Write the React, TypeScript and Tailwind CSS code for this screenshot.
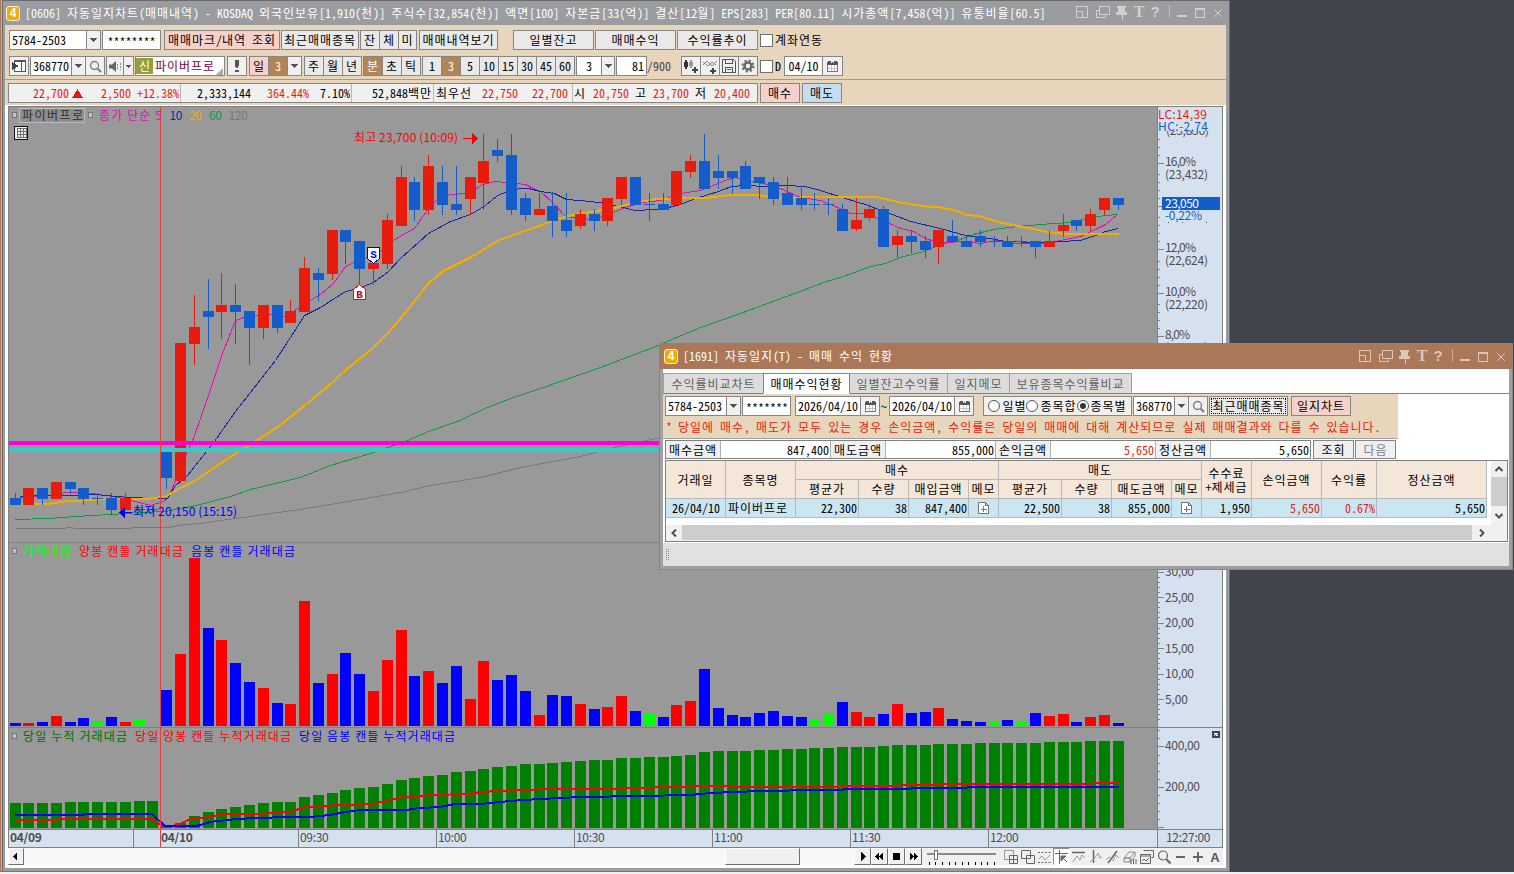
import React from "react";

const FONT = "font-['Noto_Sans_CJK_KR',sans-serif] text-[12px]";

/* Fixed-pitch label: Latin glyphs 6px wide, Hangul glyphs 12px wide. */
function T({ s, className = "" }: { s: string; className?: string }) {
  return (
    <span className={`whitespace-pre [font-feature-settings:'hwid'] ${className}`}>
      {s.split(/([\u3131-\uD7A3]+)/).map((part, i) =>
        i % 2 ? (
          <span key={i} className="tracking-[0.96px]">
            {part}
          </span>
        ) : (
          part
        ),
      )}
    </span>
  );
}

function Cell({ s, className = "", children }: { s?: string; className?: string; children?: React.ReactNode }) {
  return (
    <div className={`flex h-[20px] shrink-0 items-center justify-center border border-[#868686] leading-[14px] ${className}`}>
      {s !== undefined && <T s={s} />}
      {children}
    </div>
  );
}

const GREY = "bg-[#e9e9e9]";
const PINK = "bg-[#f6d1cc]";
const BROWN = "bg-[#b28556] text-white";
const WHITE = "bg-white";

function Drop({ className = "" }: { className?: string }) {
  return (
    <Cell className={`-ml-px bg-[#f0f0f0] ${className}`}>
      <svg width="7" height="4" shapeRendering="crispEdges">
        <path d="M0 0h7L3.5 4z" fill="#555" />
      </svg>
    </Cell>
  );
}

function Lens({ className = "" }: { className?: string }) {
  return (
    <Cell className={`-ml-px bg-[#f0f0f0] ${className}`}>
      <svg width="13" height="13" fill="none">
        <circle cx="5.5" cy="5.5" r="4" stroke="#808080" strokeWidth="1.4" />
        <path d="M8.5 8.5l3.500 3.500" stroke="#808080" strokeWidth="2.2" />
      </svg>
    </Cell>
  );
}

function Calendar({ className = "" }: { className?: string }) {
  return (
    <Cell className={`-ml-px bg-[#f0f0f0] ${className}`}>
      <svg width="11" height="11" shapeRendering="crispEdges">
        <path d="M0 1h11v10H0z" fill="#777" />
        <path d="M1 4h9v6H1z" fill="#fff" />
        <path d="M4 4h1v6H4zM7 4h1v6H7zM1 7h9v1H1z" fill="#c4c4c4" />
        <path d="M0 1h11v3H0zM1 0h3v2H1zM7 0h3v2H7z" fill="#555" />
        <path d="M4 0h1v2H4zM6 0h1v2H6z" fill="#f0f0f0" />
      </svg>
    </Cell>
  );
}

function Logo() {
  return (
    <div className="flex h-[15px] w-[14px] items-center justify-center rounded-[3px] border border-[#fff3c8] bg-[#eeab0c] font-['Liberation_Sans',sans-serif] text-[12px] leading-[13px] font-bold text-white">
      4
    </div>
  );
}

function WindowIcons({ color }: { color: string }) {
  return (
    <svg width="148" height="16" viewBox="0 -1 148 16" fill="none" stroke={color} shapeRendering="crispEdges" className="overflow-visible">
      <path d="M.5 1v10.5h11V.5H0" />
      <path d="M1 5.500h5.500v6" strokeWidth="1.4" />
      <path d="M23.500 .5h10v8h-10zM23 4.500h-3v7h9v-3" />
      <path d="M41 0h9v2h-1v4h2v3h-4.500v5h-1v-5H40V6h2V2h-1z" fill={color} stroke="none" />
      <text x="63" y="11" textAnchor="middle" fill={color} stroke="none" className="font-['Liberation_Serif',serif] text-[16px] font-bold">
        T
      </text>
      <text x="79" y="11" textAnchor="middle" fill={color} stroke="none" className="font-['Liberation_Sans',sans-serif] text-[15px] font-bold">
        ?
      </text>
      <path d="M93.500 -1v13" strokeOpacity=".7" />
      <path d="M101 10h10" strokeWidth="2" />
      <path d="M119.500 2.500h9v9h-9zM119 3.500h10" />
      <path d="M138 3l8 8M146 3l-8 8" shapeRendering="auto" />
    </svg>
  );
}

function Check() {
  return <div className="h-[13px] w-[13px] shrink-0 border border-[#707070] bg-white" />;
}

/* ---- Chart data: [up, bodyTop, bodyBottom, high, low] ---- */
const CANDLES: [number, number, number, number, number][] = [
  [0, 498, 505, 493, 505], [1, 488, 505, 488, 505], [0, 488, 499, 488, 505], [1, 482, 499, 482, 499],
  [0, 482, 489, 482, 494], [0, 488, 499, 488, 505], [0, 498, 499, 493, 505], [0, 498, 510, 493, 515],
  [1, 498, 510, 493, 510], [0, 509, 510, 509, 510], [0, 509, 510, 506, 513], [0, 450, 478, 450, 489],
  [1, 343, 481, 343, 483], [1, 327, 344, 295, 365], [0, 311, 317, 279, 349], [1, 305, 312, 273, 339],
  [0, 305, 312, 284, 344], [0, 311, 328, 311, 365], [1, 305, 328, 305, 339], [0, 305, 328, 305, 333],
  [1, 311, 323, 300, 323], [1, 268, 312, 257, 312], [0, 273, 280, 268, 301], [1, 230, 274, 230, 280],
  [0, 230, 242, 230, 264], [0, 241, 269, 241, 285], [1, 263, 269, 263, 285], [1, 220, 264, 214, 269],
  [1, 177, 226, 166, 226], [0, 182, 210, 177, 221], [1, 166, 210, 155, 215], [0, 182, 205, 166, 215],
  [0, 204, 210, 166, 215], [1, 177, 199, 177, 215], [1, 161, 183, 134, 210], [0, 150, 156, 139, 162],
  [0, 155, 210, 134, 215], [0, 198, 215, 193, 221], [1, 209, 215, 193, 215], [0, 206, 221, 192, 237],
  [0, 220, 231, 193, 237], [1, 214, 226, 209, 229], [0, 214, 221, 209, 231], [1, 198, 221, 198, 226],
  [1, 177, 199, 177, 205], [0, 177, 205, 177, 205], [0, 204, 205, 193, 221], [0, 204, 210, 193, 210],
  [1, 171, 205, 171, 205], [1, 161, 172, 155, 178], [0, 161, 189, 134, 189], [0, 171, 178, 155, 189],
  [0, 171, 178, 171, 194], [0, 166, 189, 161, 189], [0, 177, 183, 177, 199], [0, 182, 199, 177, 205],
  [0, 193, 205, 177, 205], [0, 198, 205, 188, 210], [0, 204, 205, 193, 210], [0, 204, 205, 198, 215],
  [0, 209, 231, 204, 231], [1, 220, 229, 198, 231], [1, 209, 218, 204, 221], [0, 209, 247, 206, 247],
  [1, 236, 245, 230, 258], [0, 236, 242, 230, 253], [0, 241, 250, 236, 258], [1, 230, 247, 230, 264],
  [0, 236, 242, 220, 242], [0, 241, 247, 235, 247], [0, 236, 242, 230, 247], [0, 241, 242, 236, 247],
  [0, 241, 247, 236, 247], [1, 241, 242, 236, 247], [0, 241, 247, 241, 258], [1, 241, 247, 230, 247],
  [1, 225, 231, 214, 237], [0, 220, 226, 220, 231], [1, 214, 226, 209, 231], [1, 198, 210, 198, 215],
  [0, 198, 205, 198, 210],
];

const VOL_TOP = [
  723, 723, 722, 716, 722, 718, 721, 717, 722, 720, 725, 690, 654, 558, 628, 640, 663, 682, 688, 703, 704, 601, 683, 674,
  653, 674, 691, 660, 630, 676, 671, 683, 666, 699, 661, 680, 675, 691, 715, 695, 696, 704, 709, 707, 696, 711, 714, 717,
  705, 701, 669, 708, 715, 717, 713, 711, 716, 717, 719, 713, 702, 712, 717, 714, 704, 713, 712, 708, 719, 721, 722, 722,
  720, 722, 713, 716, 714, 722, 717, 715, 723,
];

/* Ten bars per group: b = down, r = up, g = unchanged */
const VOL_KIND = [
  "brbrbbgbrg",
  "gbrrbrbbrb",
  "rrbrbbrrrb",
  "rbbrrbbbrb",
  "brbrrbgbrr",
  "bbbbbbbbgg",
  "brrbrbbrbb",
  "bgbgbrrbrr",
  "b",
].join("");
const KIND: Record<string, string> = { b: "#0000ff", r: "#ff0000", g: "#00ff00" };

const CUM_TOP = [
  803, 803, 803, 803, 802, 802, 802, 802, 802, 801, 801, 826, 823, 816, 812, 809, 807, 805, 803, 802, 802, 797, 795, 793,
  790, 788, 787, 784, 780, 778, 776, 775, 772, 771, 769, 767, 766, 764, 764, 763, 762, 761, 760, 760, 758, 758, 757, 757,
  756, 755, 752, 751, 751, 751, 750, 750, 749, 749, 748, 748, 747, 747, 747, 746, 745, 745, 745, 744, 744, 744, 743, 743,
  743, 743, 743, 742, 742, 742, 741, 741, 741,
];

const barX = (i: number) => 10 + Math.floor(i * 13.79);

const MA5 =
  "20,497 50,495 65,492 80,492 92,493 105,495 118,497 135,501 150,505 163,501 168,497 175,480 181,472 186,453 193,438 208,395 222,353 235,320 249,315 272,314 285,316 299,307 313,298 320,294 333,283 345,266 356,261 367,257 382,250 393,240 401,235 414,228 428,208 437,199 450,194 465,193 472,191 482,184 495,181 505,182 525,184 533,188 540,191 552,202 565,216 580,218 592,219 605,215 625,207 642,202 660,200 680,193 700,190 710,186 725,180 735,177 750,181 768,184 780,188 800,197 820,200 835,206 850,213 865,213 880,219 900,228 913,231 925,238 935,241 945,242 965,241 980,243 995,240 1015,243 1045,243 1060,240 1080,236 1095,229 1105,224 1117,214";
const MA10 =
  "20,496 35,495 60,495 95,494 115,496 132,497 153,498 167,498 175,485 187,475 214,441 235,411 275,360 290,337 304,315 320,307 345,291 358,288 373,282 388,271 400,258 428,233 450,221 470,214 485,205 497,195 510,190 520,188 528,188 540,191 554,193 566,199 590,201 605,203 622,207 635,210 655,209 668,207 680,204 695,198 718,191 731,186 745,185 765,186 785,185 805,186 820,190 845,198 868,205 880,210 892,214 910,221 940,228 965,235 990,238 1005,241 1035,242 1060,241 1080,240 1095,235 1105,231 1118,228";
const MA20 =
  "20,503 50,503 65,501 100,499 125,498 150,498 165,496 175,490 195,480 220,463 240,450 256,440 278,426 303,406 325,388 347,368 372,348 388,332 400,318 413,302 428,283 442,271 470,257 498,240 520,232 540,225 555,219 570,215 587,212 605,209 620,206 630,203 653,199 687,197 710,197 733,194 745,194 760,195 773,197 800,197 820,196 873,196 887,199 900,202 925,206 940,207 955,210 965,214 980,216 1000,222 1020,226 1045,231 1060,233 1090,234 1105,233 1118,233";
const MA60 =
  "15,519 48,518 75,516 110,514 140,512 165,511 180,508 200,504 230,496 250,489 275,483 300,477 330,465 370,453 407,440 428,431 457,421 487,407 510,398 540,388 600,367 650,348 700,327 740,313 775,300 797,292 823,282 843,276 870,266 885,263 900,257 923,251 940,244 957,240 973,234 993,229 1017,226 1053,223 1070,222 1087,218 1105,215 1118,214";
const MA120 =
  "15,528 63,528 68,527 77,528 130,528 132,527 167,527 185,524 200,523 220,520 250,516 270,513 300,509 330,504 400,492 430,485 480,477 520,467 580,456 610,448 665,436";
const CUM_RED =
  "15,820 57,820 58,819 152,819 162,826 172,826 180,824 190,819 210,817 222,814 262,814 270,813 290,812 305,807 325,806 340,805 373,804 390,800 402,797 420,796 430,795 470,794 480,792 500,791 520,790 550,789 600,789 640,788 700,786 760,787 820,787 857,786 897,786 898,785 938,785 939,784 1091,784 1092,783 1119,783";
const CUM_BLUE =
  "15,815 83,815 84,814 152,814 165,826 197,826 210,822 228,820 237,819 255,818 290,817 310,817 330,815 345,812 360,810 405,810 420,808 440,807 455,804 480,804 510,801 540,799 580,797 640,796 690,795 710,793 760,791 820,790 843,790 844,789 911,789 912,788 967,788 968,787 1119,787";

const CT = "font-['Noto_Sans_CJK_KR',sans-serif] text-[12px]";

function L({ x, y, w, fill, children, className = "" }: { x: number; y: number; w: number; fill: string; children: string; className?: string }) {
  return (
    <text x={x} y={y} textLength={w} fill={fill} className={`${CT} ${className}`}>
      {children}
    </text>
  );
}

function Plot() {
  return (
    <svg width="1148" height="722" viewBox="9 107 1148 722" shapeRendering="crispEdges" className="block shrink-0 bg-[#999999]">
      <g fill="none" transform="translate(.5 .5)">
        <polyline points={MA120} stroke="#7a7a7a" />
        <polyline points={MA60} stroke="#0f9b3f" />
        <polyline points={MA5} stroke="#dd12b0" />
        <polyline points={MA10} stroke="#1428a8" />
        <polyline points={MA20} stroke="#f2ae00" strokeWidth="2" />
      </g>
      {CANDLES.map(([up, t, b, h, l], i) => (
        <g key={i} fill={up ? "#e81c0c" : "#125ccb"}>
          <rect x={barX(i)} y={t} width="11" height={b - t} />
          <rect x={barX(i) + 5} y={h} width="1" height={l - h} />
        </g>
      ))}
      <rect x="9" y="441" width="1148" height="4" fill="#ff00d8" />
      <rect x="9" y="448" width="1148" height="4" fill="#33cccc" />
      <rect x="9" y="542" width="1148" height="1" fill="#808080" />
      <rect x="9" y="727" width="1148" height="1" fill="#808080" />
      {VOL_TOP.map((t, i) => (
        <rect key={i} x={barX(i)} y={t} width="11" height={726 - t} fill={KIND[VOL_KIND[i]]} />
      ))}
      {CUM_TOP.map((t, i) => (
        <rect key={i} x={barX(i)} y={t} width="11" height={828 - t} fill="#008000" />
      ))}
      <g fill="none" strokeWidth="2">
        <polyline points={CUM_RED} stroke="#ff0000" />
        <polyline points={CUM_BLUE} stroke="#0000ff" />
      </g>
      <rect x="160" y="107" width="1" height="722" fill="#e04040" />

      {[[12, 113], [88, 113], [12, 549], [12, 734]].map(([x, y]) => (
        <rect key={`${x}-${y}`} x={x + 0.5} y={y - 0.5} width="4" height="5" fill="#c4c4c4" stroke="#777" />
      ))}
      <rect x="19.500" y="108.500" width="65" height="14" fill="#8e8e8e" stroke="#bcbcbc" />
      <L x={22} y={120} w={61} fill="#303030">파이버프로</L>
      <L x={99} y={120} w={63} fill="#dd12b0">종가 단순 5</L>
      <rect x="161" y="108" width="4" height="14" fill="#999999" />
      <L x={169.5} y={120} w={13} fill="#1428a8">10</L>
      <L x={189} y={120} w={13} fill="#f2ae00">20</L>
      <L x={209} y={120} w={13} fill="#0f9b3f">60</L>
      <L x={228.5} y={120} w={19.5} fill="#777777">120</L>
      <rect x="14.500" y="126.500" width="13" height="13" fill="#eee" stroke="#111" />
      <path d="M17 128.500h9M17 131.500h9M17 134.500h9M17 137.500h9M17.500 128v10M20.500 128v10M23.500 128v10M26 128v10" stroke="#707070" fill="none" />

      <L x={354} y={142} w={104} fill="#ff0000">최고 23,700 (10:09)</L>
      <path d="M463 138h9v-5l6 5.500-6 5.500v-5h-9z" fill="#ff0000" />
      <L x={133} y={516} w={104} fill="#0000ff">최저 20,150 (15:15)</L>
      <path d="M132 512h-7v-5l-6 5.500 6 5.500v-5h7z" fill="#0000ff" />

      <path d="M367.500 247.500h12v11l-6 5-6-5z" fill="#fff" stroke="#0000cc" />
      <text x="373.500" y="258" textAnchor="middle" fill="#0000ff" className="font-['Liberation_Mono',monospace] text-[11px] font-bold">S</text>
      <path d="M353.500 299.500h12v-10l-6-5-6 5z" fill="#fff" stroke="#dd1111" />
      <text x="359.500" y="298" textAnchor="middle" fill="#cc0011" className="font-['Liberation_Mono',monospace] text-[11px] font-bold">B</text>

      <L x={23} y={556} w={48} fill="#00ff00">거래대금</L>
      <L x={79} y={556} w={104} fill="#ff0000">양봉 캔들 거래대금</L>
      <L x={191} y={556} w={104} fill="#0000ff">음봉 캔들 거래대금</L>
      <L x={23} y={741} w={104} fill="#007000">당일 누적 거래대금</L>
      <L x={135} y={741} w={156} fill="#ff0000">당일 양봉 캔들 누적거래대금</L>
      <L x={299} y={741} w={156} fill="#0000ff">당일 음봉 캔들 누적거래대금</L>
    </svg>
  );
}

const PRICE_MINOR = [139, 147, 155, 174, 182, 190, 198, 217, 225, 233, 241, 261, 269, 277, 285, 304, 312, 320, 328];
const PRICE_MAJOR = [163, 206, 249, 293, 336];
const VOL_MAJOR = [572, 597, 623, 648, 674, 699];
const CUM_MAJOR = [746, 787, 827];

function PriceAxis() {
  const gray = "#4c4c4c";
  return (
    <svg width="65" height="722" viewBox="1157 107 65 722" shapeRendering="crispEdges" className="block shrink-0 bg-[#d6e1ef]">
      <g fill="#808080">
        <rect x="1157" y="107" width="1" height="722" />
        {PRICE_MINOR.map((y) => <rect key={y} x="1158" y={y} width="2" height="1" />)}
        {[...PRICE_MAJOR, ...VOL_MAJOR, ...CUM_MAJOR].map((y) => <rect key={y} x="1158" y={y} width="6" height="1" />)}
        {VOL_MAJOR.flatMap((y) => [5, 10, 15, 20].map((d) => <rect key={`${y}-${d}`} x="1158" y={y + d} width="2" height="1" />))}
        {[730, 738, 755, 763, 771, 779, 795, 803, 811, 819].map((y) => <rect key={y} x="1158" y={y} width="2" height="1" />)}
        <rect x="1157" y="542" width="65" height="1" />
        <rect x="1157" y="727" width="65" height="1" />
      </g>
      <L x={1166} y={135} w={43} fill={gray}>(23,836)</L>
      <rect x="1158" y="107" width="64" height="24" fill="#d6e1ef" />
      <L x={1158} y={119} w={49} fill="#e81c0c">LC:14,39</L>
      <L x={1158} y={131} w={50} fill="#125ccb">HC:-2,74</L>
      <L x={1165} y={166} w={31} fill={gray}>16,0%</L>
      <L x={1165} y={179} w={43} fill={gray}>(23,432)</L>
      <L x={1165} y={252} w={31} fill={gray}>12,0%</L>
      <L x={1165} y={265} w={43} fill={gray}>(22,624)</L>
      <L x={1165} y={296} w={31} fill={gray}>10,0%</L>
      <L x={1165} y={309} w={43} fill={gray}>(22,220)</L>
      <L x={1165} y={339} w={25} fill={gray}>8,0%</L>
      <L x={1165} y={352} w={43} fill={gray}>(21,816)</L>
      <rect x="1162" y="197" width="58" height="13" fill="#125ccb" />
      <L x={1165} y={208} w={34} fill="#ffffff">23,050</L>
      <L x={1165} y={220} w={37} fill="#125ccb">-0,22%</L>
      <path d="M1168 222h1v1h-1zM1182 222h1v1h-1zM1206 222h1v1h-1z" fill={gray} />
      <L x={1165} y={576} w={29} fill={gray}>30,00</L>
      <L x={1165} y={602} w={29} fill={gray}>25,00</L>
      <L x={1165} y={627} w={29} fill={gray}>20,00</L>
      <L x={1165} y={653} w={29} fill={gray}>15,00</L>
      <L x={1165} y={678} w={29} fill={gray}>10,00</L>
      <L x={1165} y={704} w={23} fill={gray}>5,00</L>
      <L x={1165} y={750} w={35} fill={gray}>400,00</L>
      <L x={1165} y={791} w={35} fill={gray}>200,00</L>
      <rect x="1212" y="731" width="8" height="7" fill="#444" />
      <path d="M1214 733l4 3M1218 733l-4 3" stroke="#fff" />
    </svg>
  );
}

function TimeCell({ s, className = "" }: { s: string; className?: string }) {
  return (
    <div className={`flex h-full shrink-0 items-center border-r border-[#808080] pb-[4px] pl-px leading-[14px] tracking-[-0.3px] text-[#4c4c4c] ${className}`}>{s}</div>
  );
}

const RAISED = "border border-t-white border-l-white border-r-[#707070] border-b-[#707070] bg-[#f0f0f0]";

function Media({ d, className = "" }: { d: string; className?: string }) {
  return (
    <div className={`flex h-[17px] shrink-0 items-center justify-center ${RAISED} ${className}`}>
      <svg width="12" height="9" viewBox="0 0 12 9" shapeRendering="crispEdges">
        <path d={d} fill="#000" />
      </svg>
    </div>
  );
}

function Tool({ active, children }: { active?: boolean; children: React.ReactNode }) {
  return (
    <div className={`flex h-[17px] w-[17px] shrink-0 items-center justify-center ${active ? "border border-t-[#909090] border-l-[#909090] border-r-white border-b-white bg-white" : ""}`}>
      <svg width="14" height="14" viewBox="0 0 14 14" fill="none" stroke="#666" className="shrink-0">
        {children}
      </svg>
    </div>
  );
}

function BottomBar() {
  return (
    <div className="flex h-[17px] w-[1215px] items-center bg-[#f0f0f0]">
      <Media className="w-[16px]" d="M7 0v9L2.500 4.500z" />
      <div className="h-full w-[701px] shrink-0 bg-[#f8f8f8]" />
      <div className={`h-[17px] w-[75px] shrink-0 ${RAISED}`} />
      <div className="h-full w-[54px] shrink-0 bg-[#f8f8f8]" />
      <Media className="w-[17px]" d="M4 0v9L8.500 4.500z" />
      <Media className="w-[17px]" d="M5 1v7L1 4.500zM9 1v7L5 4.500z" />
      <Media className="w-[17px]" d="M2 1h7v7H2z" />
      <Media className="w-[17px]" d="M2 1v7l4-3.500zM6 1v7l4-3.500z" />
      <svg width="80" height="17" shapeRendering="crispEdges" className="shrink-0">
        <path d="M5 5h69v2H5z" fill="#8a8a8a" />
        <path d="M12.500 2.500h3v9h-3z" fill="#fff" stroke="#777" />
        <path d="M8 14v3M14 14v3M21 14v3M28 14v3M34 14v3M41 14v3M47 14v3M54 14v3M60 14v3M66 14v3M73 14v3" transform="translate(-.5 0)" stroke="#000" />
      </svg>
      <div className="flex">
        <Tool><path d="M.5 .5h9v9h-9z" stroke="#999" /><path d="M5.500 5.500h8v8h-8zM9.500 6v7M6 9.500h7" /></Tool>
        <Tool><path d="M.5 .5h9v8h-9zM5.500 5.500h8v8h-8z" fill="#f0f0f0" /></Tool>
        <Tool><path d="M0 2.500h13M0 12.500h13" strokeDasharray="2 1.500" /><path d="M1 9l3-3 3 4 5-5" stroke="#999" /></Tool>
        <Tool active><path d="M0 3.500h13M4.500 0v14" /><path d="M6 6h5l-5 5zM8 8l4 4" fill="#666" /></Tool>
        <Tool><path d="M0 2.500h13" strokeWidth="1.500" /><path d="M1 12l4-6 3 4 2-5 3 3" stroke="#999" /></Tool>
        <Tool><path d="M4.500 0v13" strokeWidth="1.500" /><path d="M1 12l4-3 4-6 2 5 2-1" stroke="#999" /></Tool>
        <Tool><path d="M2 13L11 1" strokeWidth="1.500" /><path d="M0 10l3-3 4 4 3-6 3 3" stroke="#999" /></Tool>
        <Tool><path d="M1 8l5-6h6l-5 6zM1 8h6v4H1zM7 12l5-6V2" stroke="#888" /><path d="M8 9v5M10.500 9v5M13 9v5" /></Tool>
        <Tool><path d="M3.500 .5h10v7h-2M.5 4.500h10v9H.5zM.5 6h10" /><path d="M2 11l2-2 2 2 3-3" /></Tool>
        <Tool><circle cx="6" cy="5.500" r="4.500" strokeWidth="1.200" /><path d="M9 9l4.500 4.500" strokeWidth="2" /></Tool>
        <Tool><path d="M2 7h9" strokeWidth="2" /></Tool>
        <Tool><path d="M2 7h10M7 2v10" strokeWidth="2" /></Tool>
        <Tool><text x="7" y="12" textAnchor="middle" fill="#555" stroke="none" className="font-['Liberation_Sans',sans-serif] text-[13px] font-bold">A</text></Tool>
      </div>
    </div>
  );
}

function MainWindow() {
  return (
    <div className="flex h-[872px] w-[1230px] border-b border-[#777]">
      <div className="w-px bg-[#ad7757]" />
      <div className="w-px bg-[#b4b4b4]" />
      <div className="w-px bg-[#6c6c6c]" />
      <div className="flex w-[1226px] flex-col border-t border-[#6b6b6b] bg-[#9a9c9f]">
        <div className="flex h-[24px] shrink-0 items-center pl-[3px] text-white">
          <Logo />
          <T s="[0606] 자동일지차트(매매내역) - KOSDAQ 외국인보유[1,910(천)] 주식수[32,854(천)] 액면[100] 자본금[33(억)] 결산[12월] EPS[283] PER[80.11] 시가총액[7,458(억)] 유통비율[60.5]" className="ml-[5px] w-[1051px] shrink-0 pb-px leading-[14px]" />
          <WindowIcons color="#d0d0d0" />
        </div>
        <div className="ml-[2px] flex h-[80px] w-[1221px] shrink-0 flex-col bg-[#e8d6bc] pt-[5px]">
          <div className="flex h-[20px] items-center pl-[4px]">
            <Cell s="5784-2503" className={`w-[78px] justify-start! pl-[2px] ${WHITE}`} />
            <Drop className="w-[15px]" />
            <Cell s="********" className={`ml-px w-[59px] pt-[4px] ${WHITE}`} />
            <Cell s="매매마크/내역 조회" className={`ml-[3px] w-[116px] ${PINK}`} />
            <Cell s="최근매매종목" className={`ml-px w-[78px] ${GREY}`} />
            <Cell s="잔" className={`ml-px w-[20px] ${GREY}`} />
            <Cell s="체" className={`-ml-px w-[20px] ${GREY}`} />
            <Cell s="미" className={`-ml-px w-[19px] ${GREY}`} />
            <Cell s="매매내역보기" className={`ml-[2px] w-[79px] ${GREY}`} />
            <Cell s="일별잔고" className={`ml-[15px] w-[81px] ${GREY}`} />
            <Cell s="매매수익" className={`ml-px w-[81px] ${GREY}`} />
            <Cell s="수익률추이" className={`ml-px w-[81px] ${GREY}`} />
            <div className="ml-[2px] flex items-center gap-[2px]"><Check /><T s="계좌연동" /></div>
          </div>
          <div className="mt-[6px] flex h-[20px] items-center pl-[4px]">
            <Cell className="w-[20px] bg-[#f0f0f0]">
              <svg width="15" height="12" shapeRendering="crispEdges"><path d="M2.500 .5h11v11h-11z" fill="#fff" stroke="#555" /><path d="M3 1.500h10M9.500 2v9" stroke="#555" /><path d="M0 2l7 4-7 4z" fill="#444" /></svg>
            </Cell>
            <Cell s="368770" className={`ml-px w-[42px] ${WHITE}`} />
            <Drop className="w-[15px]" />
            <Lens className="w-[20px]" />
            <Cell className="ml-px w-[18px] bg-[#f0f0f0]">
              <svg width="13" height="11"><path d="M0 3.500h3L7 0v11L3 7.500H0z" fill="#666" /><path d="M8.500 3v5M11.500 2v7" stroke="#888" strokeDasharray="2 1" /></svg>
            </Cell>
            <Cell className="-ml-px w-[11px] bg-[#f0f0f0]">
              <svg width="5" height="3" shapeRendering="crispEdges"><path d="M0 0h5L2.500 3z" fill="#555" /></svg>
            </Cell>
            <Cell className="ml-px w-[90px] justify-start! bg-white text-[#7a0045]">
              <div className="flex h-[16px] w-[17px] shrink-0 items-center justify-center bg-[#94a03c] text-white">신</div>
              <T s="파이버프로" className="ml-[2px] w-[62px] shrink-0" />
              <svg width="7" height="7" className="-ml-px shrink-0 self-end"><path d="M7 0v7H0z" fill="#aaa" /></svg>
            </Cell>
            <Cell className="ml-[2px] w-[20px] bg-[#f0f0f0]">
              <svg width="4" height="12" shapeRendering="crispEdges"><path d="M0 0h4v5l-1 3H1L0 5zM0 10h4v2H0z" fill="#555" /></svg>
            </Cell>
            <Cell s="일" className={`ml-[2px] w-[20px] ${PINK}`} />
            <Cell s="3" className={`-ml-px w-[20px] ${BROWN}`} />
            <Drop className="w-[15px]" />
            <Cell s="주" className={`ml-[2px] w-[20px] ${GREY}`} />
            <Cell s="월" className={`-ml-px w-[20px] ${GREY}`} />
            <Cell s="년" className={`-ml-px w-[20px] ${GREY}`} />
            <Cell s="분" className={`ml-px w-[20px] ${BROWN}`} />
            <Cell s="초" className={`-ml-px w-[20px] ${GREY}`} />
            <Cell s="틱" className={`-ml-px w-[20px] ${GREY}`} />
            <Cell s="1" className={`ml-px w-[20px] ${GREY}`} />
            <Cell s="3" className={`-ml-px w-[20px] ${BROWN}`} />
            <Cell s="5" className={`-ml-px w-[20px] ${GREY}`} />
            <Cell s="10" className={`-ml-px w-[20px] ${GREY}`} />
            <Cell s="15" className={`-ml-px w-[20px] ${GREY}`} />
            <Cell s="30" className={`-ml-px w-[20px] ${GREY}`} />
            <Cell s="45" className={`-ml-px w-[20px] ${GREY}`} />
            <Cell s="60" className={`-ml-px w-[20px] ${GREY}`} />
            <Cell s="3" className={`ml-px w-[26px] ${WHITE}`} />
            <Drop className="w-[14px]" />
            <Cell s="81" className={`ml-px w-[31px] justify-end! pr-[2px] ${WHITE}`} />
            <T s="/900" className="w-[34px] shrink-0 text-[#4a4038]" />
            <Cell className="w-[20px] bg-[#f0f0f0]">
              <svg width="16" height="15" shapeRendering="crispEdges"><path d="M1 3h4v5H1zM2 1h2v9H2z" fill="#333" /><path d="M6 3h4v4H6zM7 1h2v8H7z" fill="#999" /><path d="M9 11h6M12 8v6" stroke="#444" strokeWidth="2" /></svg>
            </Cell>
            <Cell className="-ml-px w-[20px] bg-[#f0f0f0]">
              <svg width="16" height="15"><path d="M1 6l4-4 5 5 5-5M1 3l5 4 4-4 4 3" stroke="#888" fill="none" /><path d="M8 12h6M11 9v6" stroke="#444" strokeWidth="2" /></svg>
            </Cell>
            <Cell className="-ml-px w-[20px] bg-[#f0f0f0]">
              <svg width="14" height="14" fill="none" stroke="#555" shapeRendering="crispEdges"><path d="M.5 .5h11l2 2v11H.5zM3.500 .5v4h7v-4M3.500 13V8.500h7V13M5 10.500h4" /></svg>
            </Cell>
            <Cell className="-ml-px w-[20px] bg-[#f0f0f0]">
              <svg width="14" height="14" fill="none" stroke="#666"><circle cx="7" cy="7" r="3.500" strokeWidth="2.500" /><circle cx="7" cy="7" r="5.500" strokeWidth="2" strokeDasharray="2.160 2.160" /></svg>
            </Cell>
            <div className="ml-[2px] flex w-[24px] shrink-0 items-center gap-[2px]"><Check /><T s="D" /></div>
            <Cell s="04/10" className={`w-[39px] ${WHITE}`} />
            <Calendar className="w-[21px]" />
          </div>
          <div className="mt-[3px] h-px shrink-0 bg-[#9c9c9c]" />
          <div className="mt-[3px] flex h-[20px] items-center pl-[3px]">
            <div className="flex h-[20px] w-[750px] shrink-0 items-center border border-[#868686] bg-[#f0f0f0] leading-[14px]">
              <T s="22,700" className="w-[60px] shrink-0 text-right text-[#e81c0c]" />
              <svg width="11" height="9" className="ml-[3px] shrink-0" shapeRendering="crispEdges"><path d="M5.500 0L11 9H0z" fill="#e81c0c" /></svg>
              <T s="2,500" className="w-[48px] shrink-0 text-right text-[#e81c0c]" />
              <T s="+12.38%" className="w-[48px] shrink-0 text-right text-[#e81c0c]" />
              <div className="ml-px h-full w-px shrink-0 bg-[#b8b8b8]" />
              <T s="2,333,144" className="w-[70px] shrink-0 text-right" />
              <T s="364.44%" className="w-[58px] shrink-0 text-right text-[#e81c0c]" />
              <T s="7.10%" className="w-[41px] shrink-0 text-right" />
              <div className="ml-px h-full w-px shrink-0 bg-[#b8b8b8]" />
              <T s="52,848백만" className="w-[80px] shrink-0 text-right" />
              <div className="ml-px h-full w-px shrink-0 bg-[#b8b8b8]" />
              <T s="최우선" className="ml-[2px] w-[37px] shrink-0" />
              <T s="22,750" className="w-[45px] shrink-0 text-right text-[#e81c0c]" />
              <T s="22,700" className="w-[50px] shrink-0 text-right text-[#e81c0c]" />
              <div className="ml-[4px] h-full w-px shrink-0 bg-[#b8b8b8]" />
              <T s="시" className="ml-px w-[14px] shrink-0" />
              <T s="20,750" className="w-[41px] shrink-0 text-right text-[#e81c0c]" />
              <T s="고" className="ml-[6px] w-[14px] shrink-0" />
              <T s="23,700" className="w-[40px] shrink-0 text-right text-[#e81c0c]" />
              <T s="저" className="ml-[6px] w-[14px] shrink-0" />
              <T s="20,400" className="w-[41px] shrink-0 text-right text-[#e81c0c]" />
            </div>
            <Cell s="매수" className={`ml-[2px] w-[40px] ${PINK}`} />
            <Cell s="매도" className="ml-[2px] w-[40px] bg-[#c6dcf3]" />
          </div>
        </div>
        <div className="ml-[2px] flex h-[763px] w-[1221px] shrink-0 flex-col bg-white pt-px pl-[3px]">
          <div className="flex h-[742px] w-[1215px] shrink-0 flex-col border border-[#808080] bg-[#d6e1ef]">
            <div className="flex">
              <Plot />
              <PriceAxis />
            </div>
            <div className="flex h-[18px] shrink-0 items-center border-t border-[#808080]">
              <TimeCell s="04/09" className="w-[125px] font-bold" />
              <TimeCell s="" className="w-[27px] border-r-[#e04040]!" />
              <TimeCell s="04/10" className="w-[138px] pl-0! font-bold" />
              <TimeCell s="09:30" className="w-[138px]" />
              <TimeCell s="10:00" className="w-[138px]" />
              <TimeCell s="10:30" className="w-[138px]" />
              <TimeCell s="11:00" className="w-[138px]" />
              <TimeCell s="11:30" className="w-[138px]" />
              <TimeCell s="12:00" className="w-[169px]" />
              <TimeCell s="12:27:00" className="border-r-0! pl-[8px]!" />
            </div>
          </div>
          <BottomBar />
        </div>
      </div>
      <div className="w-px bg-[#6c6c6c]" />
    </div>
  );
}

/* ---- Profit window ---- */
function Tab({ s, className = "" }: { s: string; className?: string }) {
  return (
    <div className={`flex h-[21px] shrink-0 items-center justify-center border border-l-0 border-[#a0a0a0] border-b-[#ab7759] bg-[#dcdcdc] leading-[14px] text-[#606060] ${className}`}>
      <T s={s} />
    </div>
  );
}

function Radio({ s, on }: { s: string; on?: boolean }) {
  return (
    <div className="flex shrink-0 items-center gap-[2px]">
      <div className="flex h-[12px] w-[12px] shrink-0 items-center justify-center rounded-full border border-[#555] bg-white">
        {on && <div className="h-[6px] w-[6px] rounded-full bg-[#333]" />}
      </div>
      <T s={s} />
    </div>
  );
}

function SumLabel({ s, className = "w-[55px]" }: { s: string; className?: string }) {
  return <div className={`flex h-full shrink-0 items-center justify-center border-r border-[#b0b0b0] bg-[#f0f0f0] ${className}`}><T s={s} /></div>;
}
function SumValue({ s, className = "" }: { s: string; className?: string }) {
  return <div className={`flex h-full shrink-0 items-center justify-end pr-[1px] ${className}`}><T s={s} /></div>;
}

function H({ s, className = "" }: { s: string; className?: string }) {
  return <div className={`flex items-center justify-center border-r border-b border-[#b8b8b8] bg-[#f4e6d9] leading-[14px] ${className}`}><T s={s} /></div>;
}
function D({ s, className = "" }: { s: string; className?: string }) {
  return <div className={`flex items-center justify-end border-r border-b border-[#b8b8b8] bg-[#c9e6f2] pr-px ${className}`}><T s={s} /></div>;
}
function Memo() {
  return (
    <div className="flex items-center justify-center border-r border-b border-[#b8b8b8] bg-[#c9e6f2]">
      <svg width="11" height="12" fill="#fff" stroke="#777" shapeRendering="crispEdges"><path d="M.5 .5h7l3 3v8H.5zM7.500 .5v3h3M5.500 4v6M3 7.500h6" /></svg>
    </div>
  );
}
function Arrow({ d, className = "" }: { d: string; className?: string }) {
  return (
    <div className={`flex shrink-0 items-center justify-center bg-[#f0f0f0] ${className}`}>
      <svg width="8" height="8" fill="none" stroke="#505050" strokeWidth="2"><path d={d} /></svg>
    </div>
  );
}

function ProfitWindow() {
  return (
    <div className="absolute top-[343px] left-[659px] flex h-[227px] w-[854px] flex-col border border-[#858585] bg-[#a0a0a0]">
      <div className="flex h-[25px] shrink-0 items-center bg-[#ab7759] pl-[4px] text-white">
        <Logo />
        <T s="[1691] 자동일지(T) - 매매 수익 현황" className="ml-[5px] w-[676px] shrink-0 pb-[2px] leading-[14px]" />
        <WindowIcons color="#dcc6b8" />
      </div>
      <div className="ml-[3px] flex h-[197px] w-[846px] shrink-0 flex-col bg-white">
        <div className="mt-[4px] flex h-[21px] shrink-0">
          <Tab s="수익률비교차트" className="w-[100px] border-r-0! border-l!" />
          <Tab s="매매수익현황" className="w-[87px] border-l! border-[#ab7759]! border-b-white! bg-white! text-black!" />
          <Tab s="일별잔고수익률" className="w-[98px]" />
          <Tab s="일지메모" className="w-[62px]" />
          <Tab s="보유종목수익률비교" className="w-[122px]" />
          <div className="grow border-b border-[#ab7759]" />
        </div>
        <div className="flex h-[45px] w-[735px] shrink-0 flex-col border-b border-[#a0a0a0] bg-[#e8d6bc] pt-[2px]">
          <div className="flex items-center pl-[2px]">
            <Cell s="5784-2503" className={`w-[62px] justify-start! pl-[2px] ${WHITE}`} />
            <Drop className="w-[15px]" />
            <Cell className={`ml-px w-[49px] justify-start! overflow-hidden pt-[4px] pl-[3px] ${WHITE}`}><T s="*******" /></Cell>
            <Cell s="2026/04/10" className={`ml-[4px] w-[66px] ${WHITE}`} />
            <Calendar className="w-[20px]" />
            <T s="~" className="w-[9px] shrink-0 pl-px" />
            <Cell s="2026/04/10" className={`w-[66px] ${WHITE}`} />
            <Calendar className="w-[20px]" />
            <Cell className="ml-[9px] w-[149px] bg-[#f0f0f0]">
              <Radio s="일별" />
              <Radio s="종목합" />
              <Radio s="종목별" on />
            </Cell>
            <Cell s="368770" className={`ml-px w-[42px] ${WHITE}`} />
            <Drop className="w-[15px]" />
            <Lens className="w-[20px]" />
            <Cell className="ml-px w-[79px] bg-[#e9e9e9]">
              <div className="flex h-[16px] w-[75px] items-center justify-center border border-dotted border-black"><T s="최근매매종목" /></div>
            </Cell>
            <Cell s="일지차트" className={`ml-[3px] w-[60px] ${PINK}`} />
          </div>
          <T s="* 당일에 매수, 매도가 모두 있는 경우 손익금액, 수익률은 당일의 매매에 대해 계산되므로 실제 매매결과와 다를 수 있습니다." className="mt-[4px] ml-[3px] leading-[14px] text-[#e81c0c]" />
        </div>
        <div className="mt-px flex h-[19px] shrink-0 pl-[2px]">
          <div className="flex h-[19px] w-[646px] shrink-0 items-center border border-[#808080] bg-white leading-[14px]">
            <SumLabel s="매수금액" />
            <SumValue s="847,400" className="w-[110px] border-r border-[#b0b0b0]" />
            <SumLabel s="매도금액" />
            <SumValue s="855,000" className="w-[110px] border-r border-[#b0b0b0]" />
            <SumLabel s="손익금액" />
            <SumValue s="5,650" className="w-[105px] border-r border-[#b0b0b0] text-[#e81c0c]" />
            <SumLabel s="정산금액" />
            <SumValue s="5,650" className="w-[99px]" />
          </div>
          <Cell s="조회" className="ml-[2px] h-[19px]! w-[41px] bg-[#efefef]" />
          <Cell s="다음" className="ml-px h-[19px]! w-[41px] bg-[#efefef] text-[#808080]" />
        </div>
        <div className="mt-px ml-[2px] flex h-[82px] w-[843px] shrink-0 flex-col border border-[#808080] bg-white">
          <div className="flex h-[64px] shrink-0">
            <div className="grid h-[57px] w-[821px] shrink-0 grid-cols-[60px_70px_63px_50px_60px_30px_63px_50px_60px_30px_50px_70px_55px_110px] grid-rows-[19px_19px_19px]">
              <H s="거래일" className="row-span-2" />
              <H s="종목명" className="row-span-2" />
              <H s="매수" className="col-span-4" />
              <H s="매도" className="col-span-4" />
              <div className="row-span-2 flex flex-col items-center justify-center border-r border-b border-[#b8b8b8] bg-[#f4e6d9] leading-[14px]"><T s="수수료" /><T s="+제세금" /></div>
              <H s="손익금액" className="row-span-2" />
              <H s="수익률" className="row-span-2" />
              <H s="정산금액" className="row-span-2" />
              <H s="평균가" /><H s="수량" /><H s="매입금액" /><H s="메모" />
              <H s="평균가" /><H s="수량" /><H s="매도금액" /><H s="메모" />
              <D s="26/04/10" className="justify-center! pr-0! pl-px" />
              <D s="파이버프로" className="justify-start! pl-[2px]" />
              <D s="22,300" /><D s="38" /><D s="847,400" /><Memo />
              <D s="22,500" /><D s="38" /><D s="855,000" /><Memo />
              <D s="1,950" />
              <D s="5,650" className="text-[#e81c0c]" />
              <D s="0.67%" className="text-[#e81c0c]" />
              <D s="5,650" />
            </div>
            <div className="ml-[4px] flex w-[16px] flex-col bg-[#f0f0f0]">
              <Arrow d="M.5 6L4 2.500 7.500 6" className="h-[16px]" />
              <div className="h-[29px] bg-[#cdcdcd]" />
              <Arrow d="M.5 2L4 5.500 7.500 2" className="h-[19px]" />
            </div>
          </div>
          <div className="flex h-[16px] bg-[#f0f0f0]">
            <Arrow d="M6 .5L2.500 4 6 7.500" className="w-[16px]" />
            <div className="h-[15px] w-[790px] bg-[#cdcdcd]" />
            <Arrow d="M2 .5L5.500 4 2 7.500" className="w-[20px]" />
          </div>
        </div>
        <div className="mt-px flex h-[23px] items-center bg-[#e1e1e1] pl-[3px]">
          <svg width="4" height="12" shapeRendering="crispEdges"><path d="M.5 0v12M2.500 0v12" stroke="#888" strokeDasharray="1 1" /></svg>
        </div>
      </div>
    </div>
  );
}

export default function App() {
  return (
    <div className={`relative h-[874px] w-[1514px] overflow-hidden bg-[#f0f0f0] text-black ${FONT}`}>
      <div className="flex h-[872px] bg-[#41444c]">
        <MainWindow />
      </div>
      <ProfitWindow />
    </div>
  );
}
